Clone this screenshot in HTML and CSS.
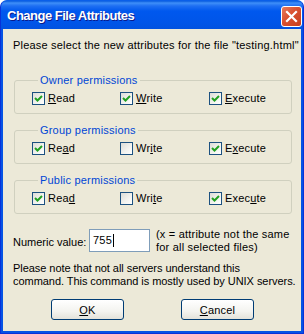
FILE: index.html
```html
<!DOCTYPE html>
<html lang="en">
<head>
    <meta charset="UTF-8">
    <title>Change File Attributes</title>
    <link rel="stylesheet" href="styles.css">
</head>
<body>
    <div class="window">
        <div class="titlebar">
            <span class="title">Change File Attributes</span>
            <button class="close-btn" aria-label="Close">
                <svg width="13" height="13" viewBox="0 0 13 13">
                    <path d="M2 2 L11 11 M11 2 L2 11" stroke="#fff" stroke-width="2.2" stroke-linecap="square"/>
                </svg>
            </button>
        </div>
        <div class="content">
            <p class="intro">Please select the new attributes for the file "testing.html"</p>

            <fieldset class="group">
                <legend>Owner permissions</legend>
                <div class="perm-row">
                    <label class="check"><span class="box checked"><svg viewBox="0 0 11 11"><path d="M2 5 L4.5 7.5 L9 3" /></svg></span><span><u>R</u>ead</span></label>
                    <label class="check"><span class="box checked"><svg viewBox="0 0 11 11"><path d="M2 5 L4.5 7.5 L9 3" /></svg></span><span><u>W</u>rite</span></label>
                    <label class="check"><span class="box checked"><svg viewBox="0 0 11 11"><path d="M2 5 L4.5 7.5 L9 3" /></svg></span><span><u>E</u>xecute</span></label>
                </div>
            </fieldset>

            <fieldset class="group">
                <legend>Group permissions</legend>
                <div class="perm-row">
                    <label class="check"><span class="box checked"><svg viewBox="0 0 11 11"><path d="M2 5 L4.5 7.5 L9 3" /></svg></span><span>Re<u>a</u>d</span></label>
                    <label class="check"><span class="box"></span><span>Wr<u>i</u>te</span></label>
                    <label class="check"><span class="box checked"><svg viewBox="0 0 11 11"><path d="M2 5 L4.5 7.5 L9 3" /></svg></span><span>E<u>x</u>ecute</span></label>
                </div>
            </fieldset>

            <fieldset class="group">
                <legend>Public permissions</legend>
                <div class="perm-row">
                    <label class="check"><span class="box checked"><svg viewBox="0 0 11 11"><path d="M2 5 L4.5 7.5 L9 3" /></svg></span><span>Rea<u>d</u></span></label>
                    <label class="check"><span class="box"></span><span>Wri<u>t</u>e</span></label>
                    <label class="check"><span class="box checked"><svg viewBox="0 0 11 11"><path d="M2 5 L4.5 7.5 L9 3" /></svg></span><span>Exec<u>u</u>te</span></label>
                </div>
            </fieldset>

            <div class="numeric-row">
                <span class="numeric-label">Numeric value:</span>
                <div class="numeric-input">755<span class="caret"></span></div>
                <span class="numeric-hint">(x = attribute not the same<br>for all selected files)</span>
            </div>

            <p class="note">Please note that not all servers understand this<br>command. This command is mostly used by UNIX servers.</p>

            <div class="buttons">
                <button class="btn"><u>O</u>K</button>
                <button class="btn"><u>C</u>ancel</button>
            </div>
        </div>
    </div>
</body>
</html>
```

FILE: styles.css
```css
* {
    margin: 0;
    padding: 0;
    box-sizing: border-box;
}

body {
    width: 304px;
    height: 334px;
    overflow: hidden;
    background: #fff;
    font-family: 'Liberation Sans', Arial, sans-serif;
    font-size: 11px;
    letter-spacing: 0.2px;
    line-height: 13px;
    color: #000;
}

.window {
    width: 304px;
    height: 334px;
    display: flex;
    flex-direction: column;
    background: #0553E4;
    border-radius: 7px 7px 0 0;
    border: 1px solid #0831D9;
    border-top-color: #0A5FE8;
}

.titlebar {
    height: 28px;
    display: flex;
    align-items: center;
    justify-content: space-between;
    padding: 0 1px 0 6px;
    border-radius: 6px 6px 0 0;
    background: linear-gradient(#0A5DDF 0, #3F8FF8 2px, #1E6FF2 5px, #0058EE 10px, #0055E8 22px, #0152E0 28px);
}

.title {
    color: #fff;
    font-family: 'Liberation Sans', Arial, sans-serif;
    font-weight: bold;
    font-size: 13px;
    letter-spacing: -0.5px;
    text-shadow: 1px 1px 0 #0A1A8A;
    margin-top: 1px;
}

.close-btn {
    width: 21px;
    height: 21px;
    border: 1px solid #fff;
    border-radius: 3px;
    background: linear-gradient(135deg, #E77A5B 0%, #D9502F 45%, #C6401F 100%);
    display: flex;
    align-items: center;
    justify-content: center;
    margin-top: 3px;
}

.content {
    flex: 1;
    margin: 0 2px 2px;
    background: #ECE9D8;
    padding: 10px 9px 0 10px;
    display: flex;
    flex-direction: column;
}

.intro {
    margin-bottom: 22px;
    white-space: nowrap;
}

.group {
    border: 1px solid #D0D0BF;
    border-radius: 3px;
    margin: 0 0 10px 1px;
    padding: 5px 0 8px 17px;
}

.group legend {
    color: #0046D5;
    padding: 0 2px;
    margin-left: 6px;
}

.perm-row {
    display: grid;
    grid-template-columns: 88px 89px 1fr;
}

.check {
    display: flex;
    align-items: center;
    gap: 3px;
    height: 13px;
}

.box {
    width: 13px;
    height: 13px;
    border: 1px solid #1C5180;
    background: linear-gradient(135deg, #DCDCD7 0%, #F4F4F0 60%, #FFFFFF 100%);
    display: flex;
    align-items: center;
    justify-content: center;
}

.box svg {
    width: 11px;
    height: 11px;
    fill: none;
    stroke: #21A121;
    stroke-width: 2;
}

u {
    text-decoration: underline;
}

.numeric-row {
    display: flex;
    align-items: center;
    margin-top: 3px;
}

.numeric-label {
    margin-top: 3px;
    width: 76px;
    flex-shrink: 0;
    white-space: nowrap;
    letter-spacing: 0;
}

.numeric-input {
    width: 61px;
    height: 23px;
    flex-shrink: 0;
    border: 1px solid #7F9DB9;
    background: #fff;
    padding: 4px 0 0 3px;
    display: flex;
    align-items: flex-start;
}

.caret {
    width: 1px;
    height: 13px;
    background: #000;
    margin-left: 1px;
}

.numeric-hint {
    margin-left: 6px;
    margin-top: 1px;
    white-space: nowrap;
}

.note {
    margin-top: 8px;
    white-space: nowrap;
    letter-spacing: -0.05px;
}

.buttons {
    display: flex;
    gap: 57px;
    padding-left: 38px;
    margin-top: 11px;
}

.btn {
    width: 73px;
    height: 21px;
    border: 1px solid #003C74;
    border-radius: 3px;
    background: linear-gradient(#FFFFFF 0%, #F3F3EF 60%, #E3E2DA 100%);
    font-family: 'Liberation Sans', Arial, sans-serif;
    font-size: 11px;
    letter-spacing: 0.2px;
    color: #000;
}
```
